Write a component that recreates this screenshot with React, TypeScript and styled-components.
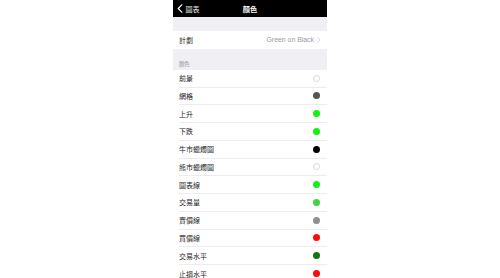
import React from "react";
import styled, { createGlobalStyle } from "styled-components";

const GlobalStyle = createGlobalStyle`
  html, body {
    margin: 0;
    padding: 0;
    background: #ffffff;
  }
  body {
    font-family: "Liberation Sans", "Noto Sans CJK TC", sans-serif;
    -webkit-font-smoothing: antialiased;
  }
`;

const Screen = styled.div`
  width: 154px;
  height: 278px;
  margin: 0 auto;
  background: #efeff4;
  overflow: hidden;
  display: flex;
  flex-direction: column;
`;

const NavBar = styled.div`
  height: 17px;
  flex-shrink: 0;
  background: #000000;
  display: grid;
  grid-template-columns: 1fr auto 1fr;
  align-items: center;
  padding: 0 4px;
  color: #ffffff;
`;

const BackButton = styled.div`
  display: flex;
  align-items: center;
  gap: 2.5px;
  font-size: 7px;
  color: #e8e8e8;
`;

const Title = styled.div`
  font-size: 7.2px;
  font-weight: 700;
`;

const Gap = styled.div<{ $h: number }>`
  height: ${(p) => p.$h}px;
  flex-shrink: 0;
`;

const SectionHeader = styled.div`
  height: 21px;
  flex-shrink: 0;
  display: flex;
  align-items: flex-end;
  padding: 0 0 3px 6px;
  box-sizing: border-box;
  font-size: 5.2px;
  color: #8a8a8f;
`;

const Group = styled.div`
  background: #ffffff;
  display: flex;
  flex-direction: column;
`;

const Row = styled.div`
  height: 17.75px;
  flex-shrink: 0;
  margin-left: 6px;
  padding-right: 6px;
  display: flex;
  align-items: center;
  justify-content: space-between;
  box-sizing: border-box;
  border-bottom: 0.5px solid #ececef;
  &:last-child {
    border-bottom: none;
  }
`;

const Label = styled.span`
  font-size: 7px;
  color: #262626;
`;

const Value = styled.span`
  display: flex;
  align-items: center;
  gap: 3px;
  font-size: 6.9px;
  color: #9a9a9f;
`;

const Dot = styled.span<{ $color: string }>`
  width: 7px;
  height: 7px;
  border-radius: 50%;
  background: ${(p) => p.$color};
  box-sizing: border-box;
  border: ${(p) => (p.$color === "#ffffff" ? "0.6px solid #d8d8dc" : "none")};
  margin-right: 1px;
`;

const colors: [string, string][] = [
  ["前景", "#ffffff"],
  ["網格", "#555555"],
  ["上升", "#14f014"],
  ["下跌", "#14f014"],
  ["牛市蠟燭圖", "#000000"],
  ["熊市蠟燭圖", "#ffffff"],
  ["圖表線", "#14f014"],
  ["交易量", "#3dd63d"],
  ["賣價線", "#8e8e93"],
  ["買價線", "#ff0a0a"],
  ["交易水平", "#107810"],
  ["止損水平", "#ff0a0a"],
];

export default function App() {
  return (
    <>
      <GlobalStyle />
      <Screen>
        <NavBar>
          <BackButton>
            <svg width="6" height="9" viewBox="0 0 6 9">
              <path
                d="M4.8 0.8 L1.2 4.5 L4.8 8.2"
                fill="none"
                stroke="#ffffff"
                strokeWidth="1.2"
                strokeLinecap="round"
                strokeLinejoin="round"
              />
            </svg>
            圖表
          </BackButton>
          <Title>顏色</Title>
          <span />
        </NavBar>
        <Gap $h={14} />
        <Group>
          <Row>
            <Label>計劃</Label>
            <Value>
              Green on Black
              <svg width="4" height="6" viewBox="0 0 4 6">
                <path
                  d="M0.8 0.6 L3.2 3 L0.8 5.4"
                  fill="none"
                  stroke="#c7c7cc"
                  strokeWidth="0.8"
                />
              </svg>
            </Value>
          </Row>
        </Group>
        <SectionHeader>顏色</SectionHeader>
        <Group>
          {colors.map(([name, c], i) => (
            <Row key={i}>
              <Label>{name}</Label>
              <Dot $color={c} />
            </Row>
          ))}
        </Group>
      </Screen>
    </>
  );
}
